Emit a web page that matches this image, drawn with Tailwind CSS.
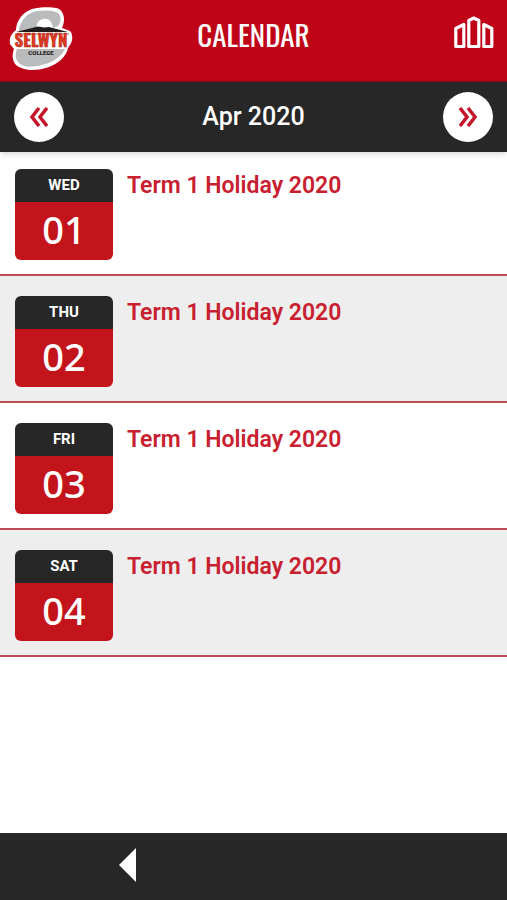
<!DOCTYPE html>
<html lang="en">
<head>
  <meta charset="UTF-8" />
  <meta name="viewport" content="width=device-width, initial-scale=1.0" />
  <title>Calendar | Selwyn College</title>
  <script src="https://cdn.jsdelivr.net/npm/@tailwindcss/browser@4"></script>
</head>
<body class="min-h-screen flex flex-col bg-white font-['Roboto',sans-serif]">

  <!-- Header -->
  <header class="h-[82px] shrink-0 bg-[#c00418] border-b border-[#7a1019] grid grid-cols-[1fr_auto_1fr] items-start px-2">
    <a href="/" aria-label="Selwyn College" class="mt-1 justify-self-start">
      <svg class="w-[67px] h-[68px]" viewBox="0 0 67 68">
        <path d="M8 26C8 17 15 8 24 5C31 3 43 3 48 4C54 5 56 11 56 15C56 19 55 22 54 24L62 27C65 30 65 37 62 41L60 44C59 52 49 61 38 64C28 67 15 67 8 61C4 57 4 50 6 45L2 40C1 34 3 30 8 26Z" fill="#fff" />
        <path d="M11 26C12 17 20 8 29 7C37 6 46 6 50 9C54 13 53 18 50 22L45 24C44 17 40 14 35 15C30 16 28 20 29 24L11 28Z" fill="#b9bbbd" />
        <path d="M9 45H57C54 52 44 59 34 61C25 63 16 64 11 59C7 55 7 50 9 45Z" fill="#b9bbbd" />
        <path d="M8 28L30 22.500L36 23.500L41 23L60 28Z" fill="#211d1d" />
        <path d="M7 29H61V31H7Z" fill="#c9b0aa" />
        <text x="33" y="43" text-anchor="middle" font-family="Oswald, sans-serif" font-size="17" font-weight="700" fill="#e0391f" stroke="#9c2418" stroke-width=".4">SELWYN</text>
        <text x="33" y="51" text-anchor="middle" font-family="Roboto, sans-serif" font-size="6" font-weight="900" fill="#222">COLLEGE</text>
      </svg>
    </a>
    <h1 class="mt-[15px] text-[29px] leading-[38px] text-white font-['Oswald',sans-serif]">CALENDAR</h1>
    <button type="button" aria-label="Menu" class="mt-4 mr-1 justify-self-end">
      <svg class="w-[42px] h-[34px]" viewBox="0 0 42 34" fill="none" stroke="#fff" stroke-width="3.200" stroke-linejoin="round">
        <path d="M2.800 30.500V12.500L10.800 8.500V30.500ZM15.800 30.500V4.500L20.800 2L25.800 4.500V30.500ZM30.800 30.500V8.500L38.800 12.500V30.500Z" />
      </svg>
    </button>
  </header>

  <!-- Month switcher -->
  <div class="relative h-[70px] shrink-0 bg-[#272727] shadow-md flex items-center justify-between px-[14px]">
    <button type="button" aria-label="Previous month" class="size-[50px] rounded-full bg-white flex items-center justify-center">
      <svg class="w-5 h-5" viewBox="0 0 20 20" fill="none" stroke="#c4162a" stroke-width="3.500">
        <path d="M10 1L3 10L10 19M18 1L11 10L18 19" />
      </svg>
    </button>
    <h2 class="text-[25px] leading-8 font-medium text-white">Apr 2020</h2>
    <button type="button" aria-label="Next month" class="size-[50px] rounded-full bg-white flex items-center justify-center">
      <svg class="w-5 h-5" viewBox="0 0 20 20" fill="none" stroke="#c4162a" stroke-width="3.500">
        <path d="M2 1L9 10L2 19M10 1L17 10L10 19" />
      </svg>
    </button>
  </div>

  <!-- Events -->
  <main class="grow">
    <ul id="events"></ul>
  </main>

  <!-- Bottom bar -->
  <footer class="h-[67px] shrink-0 bg-[#272727] flex items-start pl-[118px] pt-[15px]">
    <button type="button" aria-label="Back">
      <svg class="w-[19px] h-[34px]" viewBox="0 0 19 34">
        <path d="M18 0V34L1 17Z" fill="#fff" />
      </svg>
    </button>
  </footer>

  <script>
    const events = [
      { day: "WED", date: "01", title: "Term 1 Holiday 2020" },
      { day: "THU", date: "02", title: "Term 1 Holiday 2020" },
      { day: "FRI", date: "03", title: "Term 1 Holiday 2020" },
      { day: "SAT", date: "04", title: "Term 1 Holiday 2020" }
    ];

    const eventsEl = document.getElementById('events');
    events.forEach(event => {
      const li = document.createElement('li');
      li.className = "flex items-start gap-[14px] px-[15px] pt-5 first:pt-[17px] pb-[14px] border-b-2 border-[#bd4c57] even:bg-[#eeeeee]";
      li.innerHTML = `
        <div class="w-[98px] shrink-0 rounded-md overflow-hidden text-center text-white">
          <div class="h-[33px] bg-[#272727] text-[15px] leading-8 font-bold">${event.day}</div>
          <div class="h-[58px] bg-[#c4141b] text-[38px] leading-[54px] font-medium font-['Noto_Sans',sans-serif]">${event.date}</div>
        </div>
        <h3 class="mt-[3px] text-[23px] leading-7 font-semibold text-[#c8202f]">${event.title}</h3>
      `;
      eventsEl.appendChild(li);
    });
  </script>

</body>
</html>
